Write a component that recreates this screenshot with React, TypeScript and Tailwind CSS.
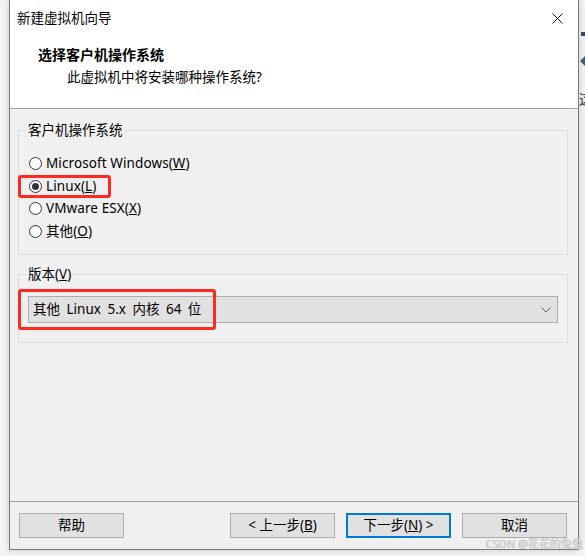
const font = "font-['Noto_Sans','Noto_Sans_CJK_SC',sans-serif]";

const Radio = ({ checked, children }: { checked?: boolean; children: React.ReactNode }) => (
  <div className="flex h-[22.7px] items-center">
    <span className="ml-[10px] flex h-[13px] w-[13px] items-center justify-center rounded-full border border-[#333] bg-white">
      {checked && <span className="h-[7px] w-[7px] rounded-full bg-[#333]" />}
    </span>
    <span className="ml-[4px] pt-[1px] tracking-[0.1px]">{children}</span>
  </div>
);

const Btn = ({ children, primary }: { children: React.ReactNode; primary?: boolean }) => (
  <button
    className={
      primary
        ? "flex h-[25px] w-[105px] items-center justify-center border-2 border-[#0078d7] bg-[#e1e1e1] pt-[1px] text-[#000]"
        : "flex h-[25px] w-[105px] items-center justify-center border border-[#adadad] bg-[#e1e1e1] pt-[1px] text-[#000]"
    }
  >
    {children}
  </button>
);

const App = () => {
  return (
    <div className={`relative h-[556px] w-[585px] overflow-hidden bg-[#f4f4f4] text-[13.5px] leading-none text-black ${font}`}>
      {/* window */}
      <div className="ml-[9px] flex h-[550px] w-[570px] flex-col border border-t-0 border-[#7a7a7a] shadow-[0_0_7px_rgba(0,0,0,0.18)]">
        {/* header */}
        <div className="relative h-[109px] border-b border-[#a0a0a0] bg-white">
          <div className="pl-[7px] pt-[12px]">新建虚拟机向导</div>
          <svg className="absolute left-[542px] top-[13px]" width="11" height="11" viewBox="0 0 11 11">
            <path d="M0.5 0.5L10.5 10.5M10.5 0.5L0.5 10.5" stroke="#111" strokeWidth="1" />
          </svg>
          <div className="pl-[28px] pt-[22px] text-[14px] font-bold">选择客户机操作系统</div>
          <div className="pl-[57px] pt-[9px]">此虚拟机中将安装哪种操作系统?</div>
        </div>

        {/* body */}
        <div className="flex flex-1 flex-col bg-[#f0f0f0]">
          <div className="relative ml-[8px] mt-[21px] h-[125px] w-[550px] border border-[#dcdcdc]">
            <span className="absolute -top-[7px] left-[7px] bg-[#f0f0f0] px-[2px]">客户机操作系统</span>
            <div className="pt-[21px]">
              <Radio>
                Microsoft Windows(<span className="underline">W</span>)
              </Radio>
              <Radio checked>
                Linux(<span className="underline">L</span>)
              </Radio>
              <Radio>
                VMware ESX(<span className="underline">X</span>)
              </Radio>
              <Radio>
                其他(<span className="underline">O</span>)
              </Radio>
            </div>
          </div>

          <div className="relative ml-[8px] mt-[19px] h-[69px] w-[550px] border border-[#dcdcdc]">
            <span className="absolute -top-[7px] left-[7px] bg-[#f0f0f0] px-[2px]">
              版本(<span className="underline">V</span>)
            </span>
            <div className="ml-[9px] mt-[21px] flex h-[27px] w-[530px] items-center justify-between border border-[#adadad] bg-[#e1e1e1] pl-[4px] pr-[6px]">
              <span className="pt-[1px] [word-spacing:3px]">其他 Linux 5.x 内核 64 位</span>
              <svg width="10" height="6" viewBox="0 0 10 6">
                <path d="M0.5 0.5L5 5L9.5 0.5" fill="none" stroke="#606060" strokeWidth="1" />
              </svg>
            </div>
          </div>

          <div className="flex-1" />

          {/* footer */}
          <div className="flex h-[48px] items-start border-t border-[#a0a0a0] pt-[11px]">
            <div className="ml-[9px]">
              <Btn>帮助</Btn>
            </div>
            <div className="ml-auto mr-[11px] flex gap-[11px]">
              <Btn>
                &lt; 上一步(<span className="underline">B</span>)
              </Btn>
              <Btn primary>
                下一步(<span className="underline">N</span>) &gt;
              </Btn>
              <Btn>取消</Btn>
            </div>
          </div>
        </div>
      </div>

      {/* annotation boxes */}
      <div className="absolute left-[18px] top-[175px] h-[23px] w-[93px] rounded-[3px] border-[3px] border-[#ff2a1f]" />
      <div className="absolute left-[18px] top-[289px] h-[41px] w-[198px] rounded-[3px] border-[3px] border-[#ff2a1f]" />

      {/* bits of the desktop behind, right edge */}
      <div className="absolute left-[581px] top-[32px] h-[4px] w-[4px] bg-[#3b4a5a]" />
      <div className="absolute left-[580px] top-[56px] h-0 w-0 border-y-[5px] border-r-[5px] border-y-transparent border-r-[#4a5a68]" />
      <div className="absolute left-[579px] top-[92px] w-[6px] overflow-hidden text-[14px] text-[#333]">这</div>

      {/* watermark */}
      <div className="absolute right-[2px] top-[538px] text-[11px] text-[#d8d8d8] [text-shadow:0_0_1px_#999]">
        CSDN @花花的兔兔
      </div>
    </div>
  );
};

export default App;
